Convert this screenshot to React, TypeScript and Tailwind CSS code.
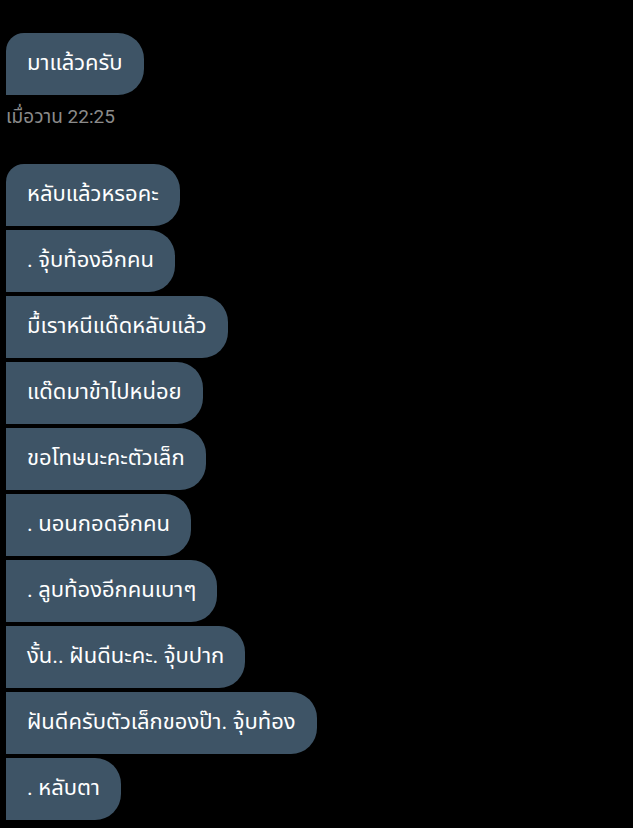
import React from "react";

const messages = [
  "หลับแล้วหรอคะ",
  ". จุ้บท้องอีกคน",
  "มื้เราหนีแด๊ดหลับแล้ว",
  "แด๊ดมาข้าไปหน่อย",
  "ขอโทษนะคะตัวเล็ก",
  ". นอนกอดอีกคน",
  ". ลูบท้องอีกคนเบาๆ",
  "งั้น.. ฝันดีนะคะ. จุ้บปาก",
  "ฝันดีครับตัวเล็กของป๊า. จุ้บท้อง",
  ". หลับตา",
];

const Bubble = ({ text, first }: { text: string; first?: boolean }) => (
  <div
    className={`w-fit h-[62px] flex items-center pl-[21px] pr-[21px] bg-[#3e5466] text-white text-[22px] rounded-r-[26px] ${
      first ? "rounded-tl-[18px]" : ""
    }`}
  >
    <span className="leading-none -mt-[2px]">{text}</span>
  </div>
);

const App = (): JSX.Element => {
  return (
    <div
      className="w-full min-h-[828px] bg-black px-[6px] pt-[33px] overflow-hidden"
      style={{ fontFamily: 'Roboto, "Noto Sans", "Noto Sans Thai", sans-serif' }}
    >
      <Bubble text="มาแล้วครับ" first />
      <p className="mt-[12px] text-[19px] leading-none text-[#8b8b8b]">เมื่อวาน 22:25</p>
      <div className="flex flex-col gap-[4px] mt-[38px]">
        {messages.map((m, i) => (
          <Bubble key={i} text={m} first={i === 0} />
        ))}
      </div>
    </div>
  );
};

export default App;
